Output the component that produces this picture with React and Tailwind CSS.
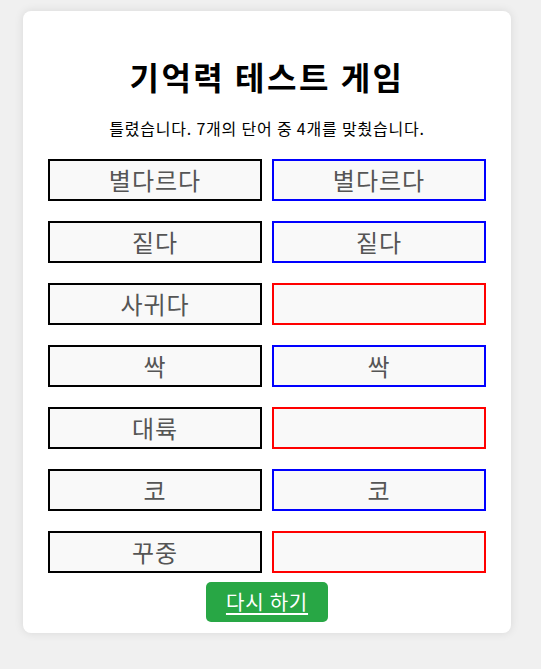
import React from "react";

const rows = [
  { word: "별다르다", answer: "별다르다", ok: true },
  { word: "짙다", answer: "짙다", ok: true },
  { word: "사귀다", answer: "", ok: false },
  { word: "싹", answer: "싹", ok: true },
  { word: "대륙", answer: "", ok: false },
  { word: "코", answer: "코", ok: true },
  { word: "꾸중", answer: "", ok: false },
];

function App() {
  return (
    <div
      className="min-h-screen bg-[#f0f0f0] pt-[11px] pl-[23px]"
      style={{ fontFamily: '"Noto Sans CJK KR", "Noto Sans", sans-serif' }}
    >
      <div className="w-[488px] bg-white rounded-lg shadow-[0_0_10px_rgba(0,0,0,0.1)] px-[25px] pt-[45px] pb-[11px] flex flex-col items-center">
        <h1 className="text-[32px] leading-[40px] font-bold text-black tracking-[2.5px]">기억력 테스트 게임</h1>
        <p className="mt-[20px] text-[16px] leading-[24px] text-black tracking-[0.8px]">
          틀렸습니다. 7개의 단어 중 4개를 맞췄습니다.
        </p>
        <div className="mt-[19px] w-full grid grid-cols-2 gap-x-[10px] gap-y-[20px]">
          {rows.map((r, i) => (
            <React.Fragment key={i}>
              <div className="h-[42px] border-2 border-black bg-[#f9f9f9] flex items-center justify-center text-[24px] text-[#555] tracking-[1px]">
                {r.word}
              </div>
              <div
                className={`h-[42px] border-2 ${r.ok ? "border-[#0000ff]" : "border-[#ff0000]"} bg-[#f9f9f9] flex items-center justify-center text-[24px] text-[#555] tracking-[1px]`}
              >
                {r.answer}
              </div>
            </React.Fragment>
          ))}
        </div>
        <button className="mt-[9px] h-[40px] w-[122px] rounded-[5px] bg-[#28a745] text-white text-[20px] tracking-[0.8px] underline underline-offset-[3px] flex items-center justify-center">
          다시 하기
        </button>
      </div>
    </div>
  );
}

export default App;
